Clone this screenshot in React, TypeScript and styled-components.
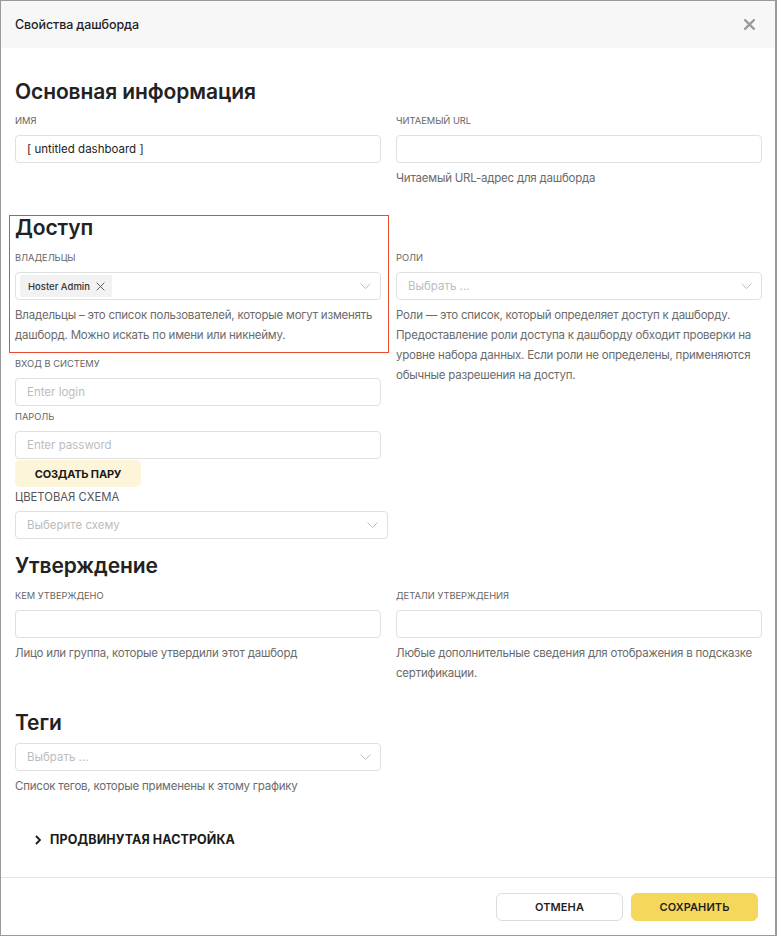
import React from 'react';
import styled, { createGlobalStyle } from 'styled-components';

const GlobalStyle = createGlobalStyle`
  html, body {
    margin: 0;
    padding: 0;
    background: #ffffff;
  }
  body {
    font-family: Inter, "Noto Sans", "Liberation Sans", sans-serif;
    color: #222;
  }
`;

const Modal = styled.div`
  box-sizing: border-box;
  width: 777px;
  height: 936px;
  border: 1px solid #9a9a9a;
  border-right-width: 2px;
  display: flex;
  flex-direction: column;
  background: #fff;
`;

const Header = styled.div`
  height: 47px;
  flex: none;
  background: #f7f7f7;
  display: flex;
  align-items: center;
  justify-content: space-between;
  padding: 0 19px 0 14px;
`;

const Title = styled.div`
  font-size: 12.5px;
  font-weight: 500;
  color: #1f1f1f;
  letter-spacing: -0.1px;
`;

const CloseButton = styled.button`
  border: none;
  background: none;
  padding: 0;
  width: 12px;
  height: 12px;
  display: flex;
  color: #9a9a9a;
  cursor: pointer;
`;

const Body = styled.div`
  flex: 1;
  padding: 30px 13px 0 14px;
`;

const Heading = styled.h2<{ $top?: number }>`
  margin: ${(p) => p.$top || 0}px 0 0;
  font-size: 21px;
  line-height: 28px;
  font-weight: 600;
  color: #222;
  letter-spacing: -0.1px;
`;

const Row = styled.div<{ $top?: number }>`
  display: grid;
  grid-template-columns: 366px 366px;
  column-gap: 15px;
  align-items: start;
  margin-top: ${(p) => p.$top || 0}px;
`;

const Column = styled.div<{ $pad?: number }>`
  display: flex;
  flex-direction: column;
  padding-top: ${(p) => p.$pad || 0}px;
`;

const Label = styled.div<{ $top?: number }>`
  font-size: 9.3px;
  line-height: 14px;
  text-transform: uppercase;
  color: #666;
  margin-top: ${(p) => p.$top ?? 8}px;
  margin-bottom: 7px;
`;

const BigLabel = styled.div`
  font-size: 11.3px;
  line-height: 16px;
  text-transform: uppercase;
  color: #555;
  margin-top: 2px;
  margin-bottom: 6px;
`;

const Input = styled.input`
  box-sizing: border-box;
  width: 100%;
  height: 28px;
  border: 1px solid #e0e0e0;
  border-radius: 4px;
  padding: 0 11px;
  font-family: inherit;
  font-size: 11.5px;
  color: #222;
  outline: none;
  &::placeholder {
    color: #bdbdbd;
  }
`;

const SelectBox = styled.div<{ $wide?: boolean }>`
  box-sizing: border-box;
  width: ${(p) => (p.$wide ? '373px' : '100%')};
  height: 28px;
  border: 1px solid #e0e0e0;
  border-radius: 4px;
  padding: 0 9px 0 4px;
  display: flex;
  align-items: center;
  justify-content: space-between;
`;

const Placeholder = styled.span`
  font-size: 11.5px;
  color: #bdbdbd;
  padding-left: 7px;
`;

const Tag = styled.span`
  display: inline-flex;
  align-items: center;
  gap: 6px;
  height: 22px;
  padding: 0 7px 0 8px;
  background: #f2f2f2;
  border-radius: 2px;
  font-size: 9.5px;
  font-weight: 500;
  color: #333;
`;

const Help = styled.div`
  margin-top: 5px;
  font-size: 11.5px;
  line-height: 20px;
  color: #6b6b6b;
  letter-spacing: -0.22px;
`;

const Highlight = styled.div`
  position: relative;
  display: flex;
  flex-direction: column;
  &::after {
    content: '';
    position: absolute;
    top: 1px;
    left: -6px;
    right: -8px;
    bottom: -8px;
    border: 1.5px solid #ea4a30;
    pointer-events: none;
  }
`;

const PairButton = styled.button`
  align-self: flex-start;
  margin-top: 1px;
  width: 126px;
  height: 27px;
  border: none;
  border-radius: 5px;
  background: #fdf5d9;
  font-family: inherit;
  font-size: 11px;
  font-weight: 700;
  color: #1a1a1a;
  letter-spacing: -0.2px;
`;

const Advanced = styled.div`
  margin-top: 34px;
  display: flex;
  align-items: center;
  gap: 9px;
  padding-left: 20px;
  font-size: 12.5px;
  line-height: 20px;
  font-weight: 700;
  color: #1a1a1a;
  letter-spacing: 0.1px;
`;

const Footer = styled.div`
  box-sizing: border-box;
  flex: none;
  height: 58px;
  border-top: 1px solid #e3e3e3;
  display: flex;
  align-items: center;
  justify-content: flex-end;
  gap: 8px;
  padding: 0 17px 0 0;
`;

const FooterButton = styled.button<{ $primary?: boolean }>`
  box-sizing: border-box;
  width: 127px;
  height: 28px;
  border-radius: 6px;
  border: 1px solid ${(p) => (p.$primary ? '#f5d85b' : '#dcdcdc')};
  background: ${(p) => (p.$primary ? '#f5d85b' : '#fff')};
  font-family: inherit;
  font-size: 11px;
  font-weight: 600;
  color: #1f1f1f;
  letter-spacing: 0.1px;
`;

const Chevron = () => (
  <svg width="11" height="6" viewBox="0 0 11 6" fill="none">
    <path d="M0.5 0.5L5.5 5.5L10.5 0.5" stroke="#bdbdbd" strokeWidth="1" />
  </svg>
);

const Cross = ({ size, color, width }: { size: number; color: string; width: number }) => (
  <svg width={size} height={size} viewBox="0 0 10 10" fill="none">
    <path d="M1 1L9 9M9 1L1 9" stroke={color} strokeWidth={width} strokeLinecap="round" />
  </svg>
);

const Select = ({ value, wide }: { value?: React.ReactNode; wide?: boolean }) => (
  <SelectBox $wide={wide}>
    {value || <Placeholder>Выбрать ...</Placeholder>}
    <Chevron />
  </SelectBox>
);

export default function App() {
  return (
    <>
      <GlobalStyle />
      <Modal>
        <Header>
          <Title>Свойства дашборда</Title>
          <CloseButton>
            <Cross size={11} color="#9a9a9a" width={2} />
          </CloseButton>
        </Header>
        <Body>
          <Heading>Основная информация</Heading>
          <Row>
            <Column>
              <Label>Имя</Label>
              <Input defaultValue="[ untitled dashboard ]" />
            </Column>
            <Column>
              <Label>Читаемый URL</Label>
              <Input />
              <Help>Читаемый URL-адрес для дашборда</Help>
            </Column>
          </Row>

          <Row $top={26}>
            <Column>
              <Highlight>
                <Heading>Доступ</Heading>
                <Label $top={9}>Владельцы</Label>
                <Select
                  value={
                    <Tag>
                      Hoster Admin
                      <Cross size={9} color="#555" width={1} />
                    </Tag>
                  }
                />
                <Help>
                  Владельцы – это список пользователей, которые могут изменять дашборд. Можно
                  искать по имени или никнейму.
                </Help>
              </Highlight>
              <Label $top={12}>Вход в систему</Label>
              <Input placeholder="Enter login" />
              <Label $top={4}>Пароль</Label>
              <Input placeholder="Enter password" />
              <PairButton>СОЗДАТЬ ПАРУ</PairButton>
              <BigLabel>Цветовая схема</BigLabel>
              <SelectBox $wide>
                <Placeholder>Выберите схему</Placeholder>
                <Chevron />
              </SelectBox>
            </Column>
            <Column $pad={28}>
              <Label $top={9}>Роли</Label>
              <Select />
              <Help>
                Роли — это список, который определяет доступ к дашборду. Предоставление роли
                доступа к дашборду обходит проверки на уровне набора данных. Если роли не
                определены, применяются обычные разрешения на доступ.
              </Help>
            </Column>
          </Row>

          <Heading $top={13}>Утверждение</Heading>
          <Row>
            <Column>
              <Label $top={9}>Кем утверждено</Label>
              <Input />
              <Help>Лицо или группа, которые утвердили этот дашборд</Help>
            </Column>
            <Column>
              <Label $top={9}>Детали утверждения</Label>
              <Input />
              <Help>Любые дополнительные сведения для отображения в подсказке сертификации.</Help>
            </Column>
          </Row>

          <Heading $top={26}>Теги</Heading>
          <Row $top={6}>
            <Column>
              <Select />
              <Help>Список тегов, которые применены к этому графику</Help>
            </Column>
          </Row>

          <Advanced>
            <svg width="6" height="10" viewBox="0 0 6 10" fill="none">
              <path d="M1 1L5 5L1 9" stroke="#1a1a1a" strokeWidth="1.8" />
            </svg>
            ПРОДВИНУТАЯ НАСТРОЙКА
          </Advanced>
        </Body>
        <Footer>
          <FooterButton>ОТМЕНА</FooterButton>
          <FooterButton $primary>СОХРАНИТЬ</FooterButton>
        </Footer>
      </Modal>
    </>
  );
}
